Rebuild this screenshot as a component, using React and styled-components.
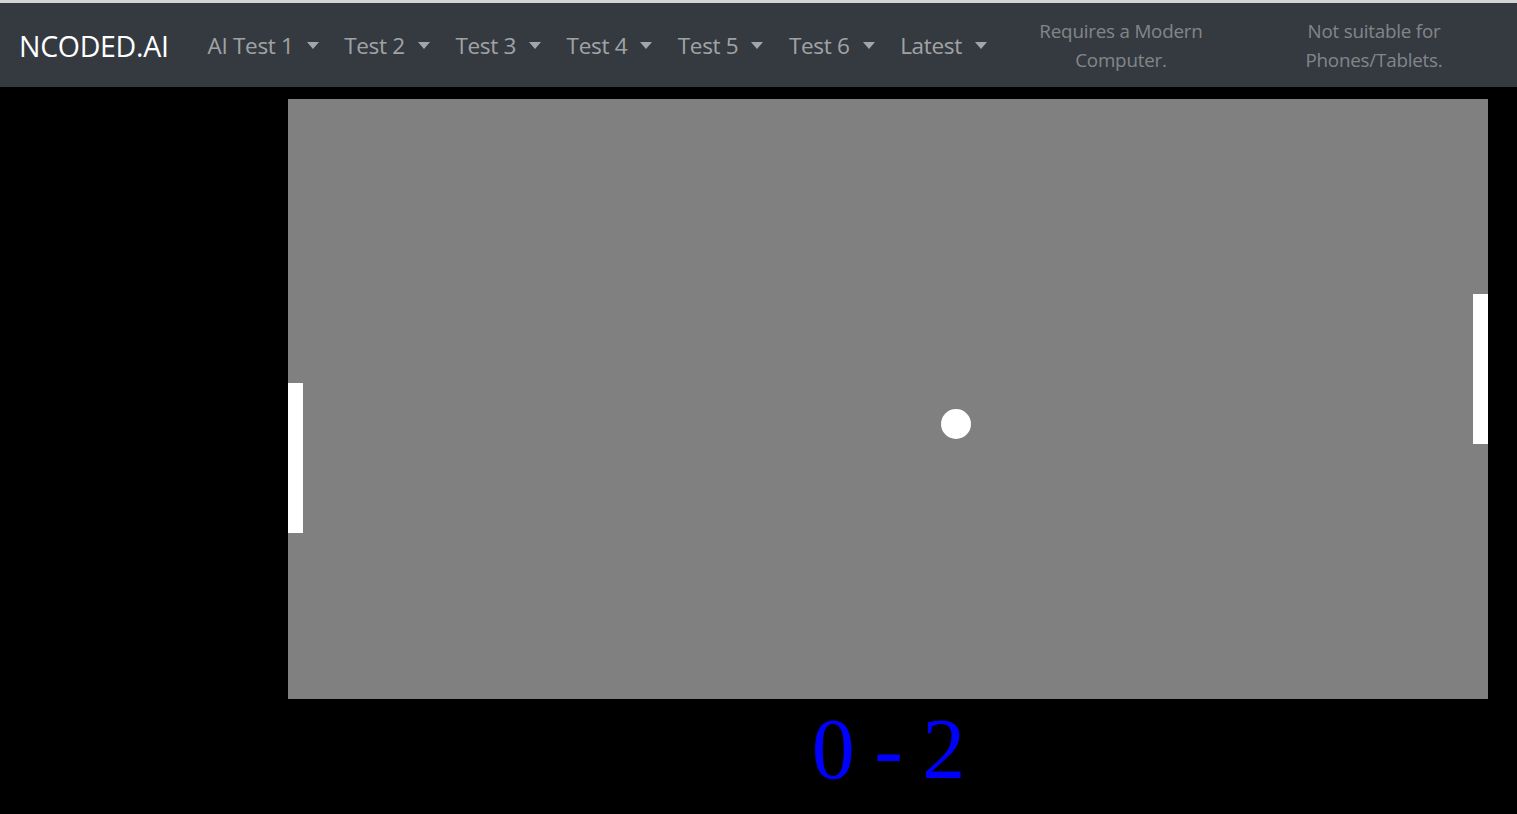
import React from 'react';
import styled, { createGlobalStyle } from 'styled-components';

const GlobalStyle = createGlobalStyle`
  html, body {
    margin: 0;
    padding: 0;
    background: #000;
  }
  body {
    font-family: "Open Sans", "Noto Sans", sans-serif;
    overflow: hidden;
  }
`;

const menuItems = ['AI Test 1', 'Test 2', 'Test 3', 'Test 4', 'Test 5', 'Test 6', 'Latest'];

function App() {
  return (
    <>
      <GlobalStyle />
      <Page>
        <Navbar>
          <Brand>NCODED.AI</Brand>
          <NavList>
            {menuItems.map((item) => (
              <NavLink key={item}>
                {item}
                <Caret />
              </NavLink>
            ))}
          </NavList>
          <Notices>
            <Notice width={170}>Requires a Modern Computer.</Notice>
            <Notice width={150}>Not suitable for Phones/Tablets.</Notice>
          </Notices>
        </Navbar>
        <Main>
          <Game>
            <Court>
              <Paddle side="left" top={284} />
              <Paddle side="right" top={195} />
              <Ball />
            </Court>
            <Score>0 - 2</Score>
          </Game>
        </Main>
      </Page>
    </>
  );
}

const Page = styled.div`
  min-height: 814px;
  background: #000;
  border-top: 3px solid #d4d4d4;
`;

const Navbar = styled.nav`
  display: flex;
  align-items: center;
  height: 84px;
  padding: 0 68px 0 19px;
  background-color: #343a40;
`;

const Brand = styled.a`
  color: #fff;
  font-size: 28.5px;
  letter-spacing: -0.3px;
  margin-right: 39px;
  margin-top: 1px;
  white-space: nowrap;
`;

const NavList = styled.div`
  display: flex;
  align-items: center;
  gap: 25.5px;
`;

const NavLink = styled.a`
  display: flex;
  align-items: center;
  color: rgba(255, 255, 255, 0.55);
  font-size: 22.5px;
  letter-spacing: -0.3px;
  white-space: nowrap;
  cursor: pointer;
`;

const Caret = styled.span`
  display: inline-block;
  margin-left: 13px;
  margin-top: 1px;
  border-top: 7px solid rgba(255, 255, 255, 0.55);
  border-left: 6.5px solid transparent;
  border-right: 6.5px solid transparent;
`;

const Notices = styled.div`
  display: flex;
  align-items: center;
  gap: 93px;
  margin-left: auto;
  margin-top: 2px;
`;

const Notice = styled.div`
  width: ${(p) => p.width}px;
  color: rgba(255, 255, 255, 0.4);
  font-size: 18.8px;
  line-height: 29px;
  text-align: center;
  letter-spacing: -0.2px;
`;

const Main = styled.main`
  display: flex;
  padding: 12px 0 0 288px;
`;

const Game = styled.div`
  display: flex;
  flex-direction: column;
  align-items: center;
  width: 1200px;
`;

const Court = styled.div`
  position: relative;
  width: 1200px;
  height: 600px;
  background: #808080;
`;

const Paddle = styled.div`
  position: absolute;
  top: ${(p) => p.top}px;
  ${(p) => (p.side === 'left' ? 'left: 0;' : 'right: 0;')}
  width: 15px;
  height: 150px;
  background: #fff;
`;

const Ball = styled.div`
  position: absolute;
  left: 653px;
  top: 310px;
  width: 30px;
  height: 30px;
  border-radius: 50%;
  background: #fff;
`;

const Score = styled.div`
  color: #0000ff;
  font-family: "Liberation Serif", "Times New Roman", serif;
  font-size: 86px;
  letter-spacing: -1px;
  line-height: normal;
`;

export default App;
